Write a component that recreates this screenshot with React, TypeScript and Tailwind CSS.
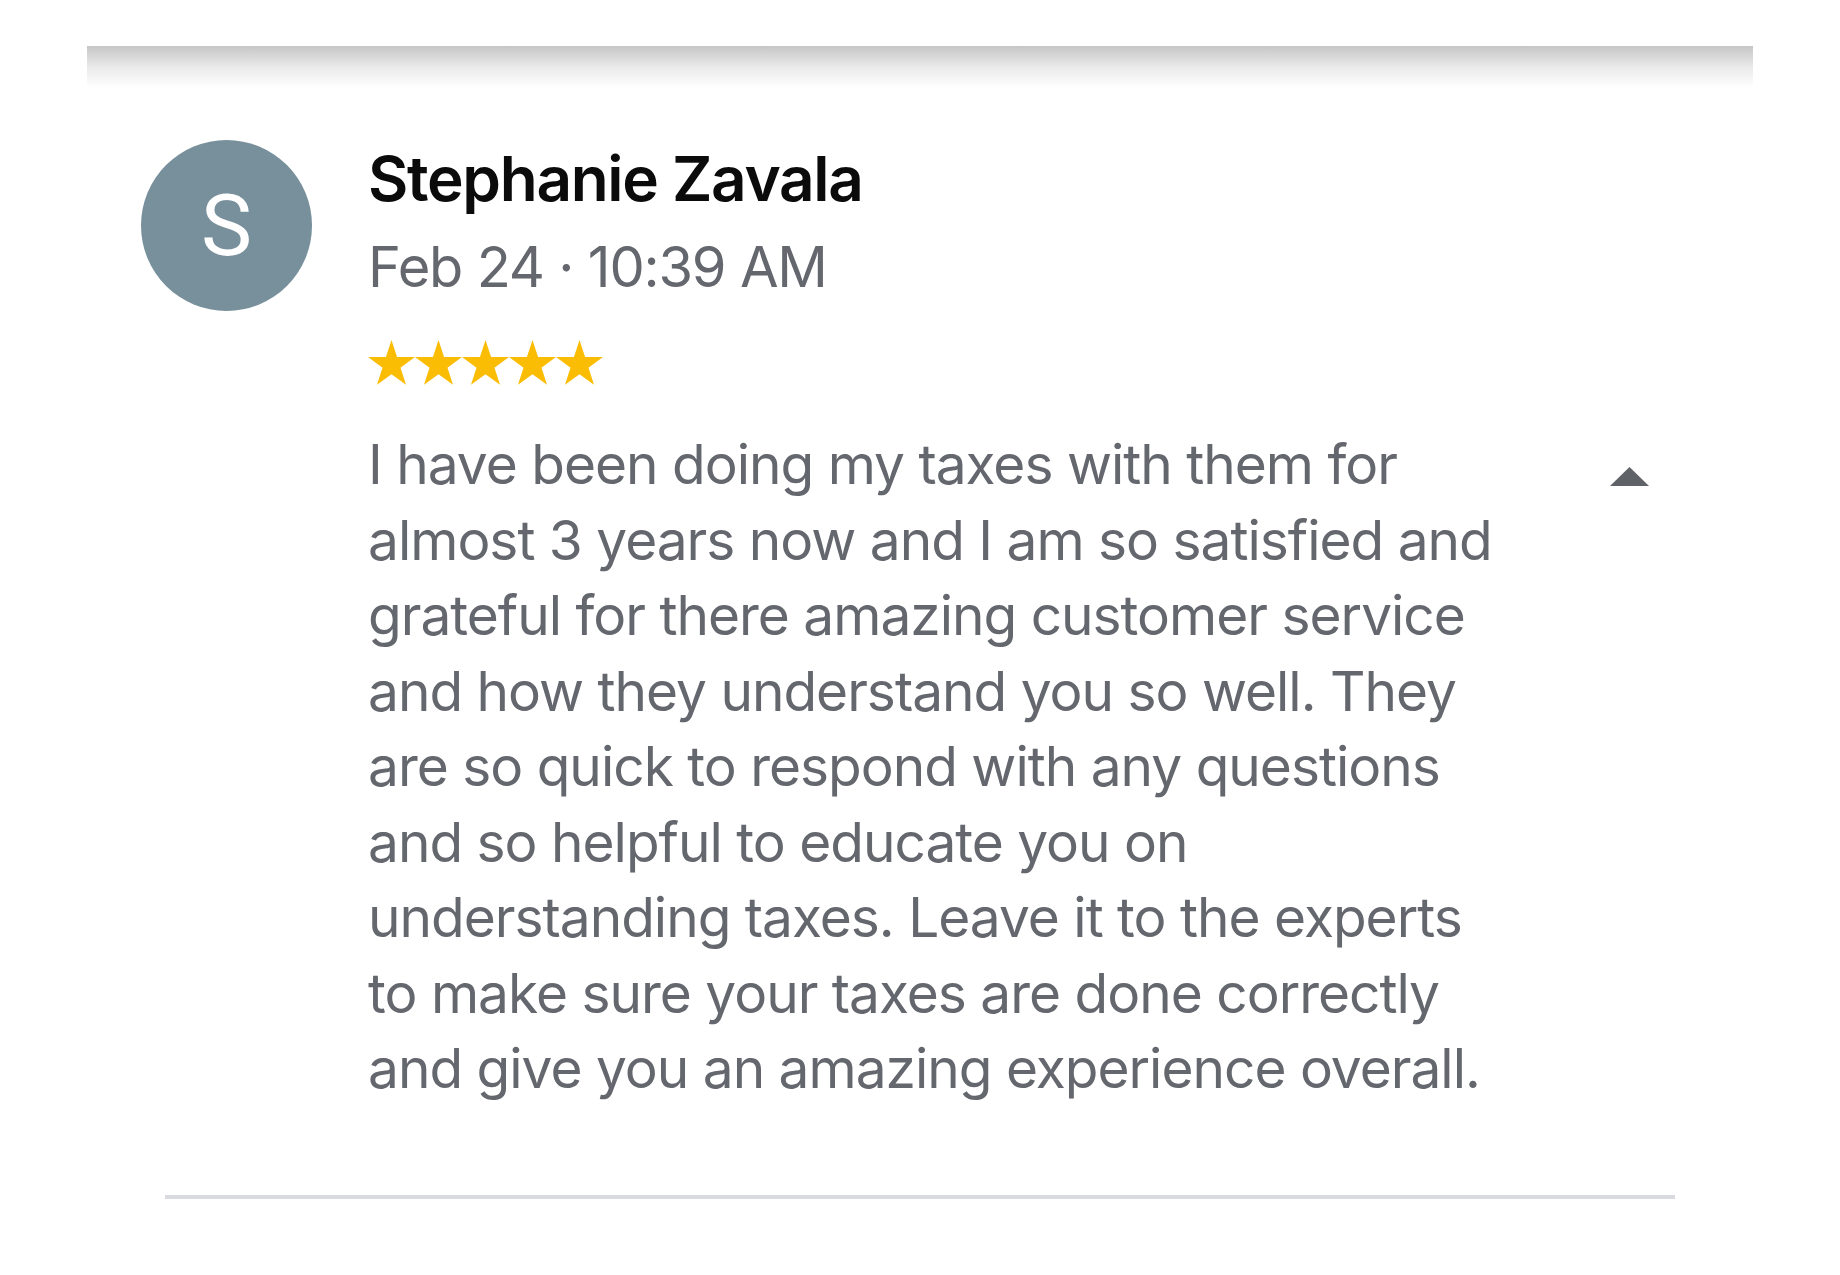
const REVIEW_LINES = [
  'I have been doing my taxes with them for',
  'almost 3 years now and I am so satisfied and',
  'grateful for there amazing customer service',
  'and how they understand you so well. They',
  'are so quick to respond with any questions',
  'and so helpful to educate you on',
  'understanding taxes. Leave it to the experts',
  'to make sure your taxes are done correctly',
  'and give you an amazing experience overall.',
];

export default function App() {
  return (
    <div className="min-h-screen bg-white font-['Inter',sans-serif]">
      {/* shadow of the header card above */}
      <div className="mx-[87px] pt-[46px]">
        <div className="h-[42px] bg-gradient-to-b from-[#c6c6c6] via-[#eaeaea] to-white" />
      </div>

      <div className="mt-[52px] flex pl-[141px] pr-[191px]">
        <div className="flex h-[171px] w-[171px] shrink-0 items-center justify-center rounded-full bg-[#78909c] font-['Roboto',sans-serif] text-[86px] text-white">
          S
        </div>

        <div className="ml-[56px] flex-1 pt-[3px]">
          <div className="text-[62px] font-semibold leading-[72px] tracking-[-1.3px] text-[#0b0b0b]">
            Stephanie Zavala
          </div>
          <div className="mt-[16px] text-[56px] leading-[72px] tracking-[-1.2px] text-[#65676e]">
            Feb 24 · 10:39 AM
          </div>

          <Stars />

          <div className="mt-[42px] flex items-start justify-between">
            <p className="text-[55px] leading-[75.5px] tracking-[-1px] text-[#65676e]">
              {REVIEW_LINES.map((line) => (
                <span key={line} className="block whitespace-nowrap">
                  {line}
                </span>
              ))}
            </p>
            <svg width="39" height="19" viewBox="0 0 39 19" className="mt-[40px] shrink-0">
              <polygon points="19.5,0 39,19 0,19" fill="#5f6368" />
            </svg>
          </div>
        </div>
      </div>

      <div className="mx-[165px] mt-[88px] h-[4px] bg-[#d9dbe0]" />
    </div>
  );
}

function Stars() {
  return (
    <div className="mt-[37px] flex">
      {[0, 1, 2, 3, 4].map((i) => (
        <svg key={i} width="47" height="45" viewBox="0 0 46 44">
          <polygon
            points="23,0 28.43,16.71 46,16.71 31.79,27.04 37.21,43.74 23,33.42 8.79,43.74 14.21,27.04 0,16.71 17.57,16.71"
            fill="#fbbc04"
          />
        </svg>
      ))}
    </div>
  );
}
